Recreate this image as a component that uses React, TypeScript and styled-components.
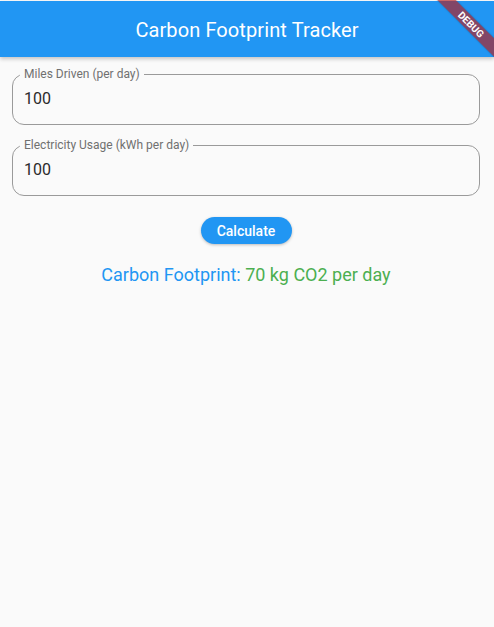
import React from "react";
import styled, { createGlobalStyle } from "styled-components";

const Global = createGlobalStyle`
  html, body { margin: 0; padding: 0; background: #fafafa; }
  body { font-family: Roboto, "Noto Sans", "Liberation Sans", sans-serif; }
  * { box-sizing: border-box; }
`;

const Page = styled.div`
  position: relative;
  width: 494px;
  height: 627px;
  background: #fafafa;
  padding-top: 1px;
  overflow: hidden;
`;

const AppBar = styled.header`
  height: 56px;
  background: #2196f3;
  display: flex;
  align-items: center;
  justify-content: center;
  box-shadow: 0 2px 4px rgba(0, 0, 0, 0.22);
  position: relative;
  z-index: 1;
`;

const Title = styled.h1`
  margin: 2px 0 0 0;
  color: #ffffff;
  font-size: 20px;
  font-weight: 400;
  letter-spacing: 0.1px;
`;

const Content = styled.main`
  display: flex;
  flex-direction: column;
  padding: 10px 14px 0 12px;
`;

const Field = styled.fieldset<{ $gap?: number }>`
  margin: ${(p) => p.$gap ?? 0}px 0 0 0;
  height: 58px;
  border: 1px solid #9a9a9a;
  border-radius: 12px;
  padding: 0 11px 0 7px;
`;

const Legend = styled.legend`
  font-size: 12px;
  line-height: 14px;
  color: #707070;
  padding: 0 4px;
`;

const InputBox = styled.div`
  height: 34px;
  display: flex;
  align-items: center;
`;

const Input = styled.input`
  border: none;
  background: transparent;
  outline: none;
  font-family: inherit;
  font-size: 16px;
  color: #2b2b2b;
  padding: 0 0 0 4px;
  margin: 0;
  width: 100%;
`;

const ButtonRow = styled.div`
  display: flex;
  justify-content: center;
  margin-top: 21px;
`;

const Button = styled.button`
  height: 27px;
  width: 91px;
  border: none;
  border-radius: 14px;
  background: #2196f3;
  color: #fff;
  font-family: inherit;
  font-size: 14px;
  font-weight: 500;
  box-shadow: 0 1px 3px rgba(0, 0, 0, 0.25);
  padding: 0;
`;

const Result = styled.p`
  margin: 20px 0 0 0;
  text-align: center;
  font-size: 18px;
  line-height: 22px;
`;

const Tone = styled.span<{ $color: string }>`
  color: ${(p) => p.$color};
`;

const BannerClip = styled.div`
  position: absolute;
  top: 0;
  right: 0;
  width: 64px;
  height: 64px;
  overflow: hidden;
  z-index: 2;
  pointer-events: none;
`;

const Band = styled.div`
  position: absolute;
  left: -14px;
  top: 18px;
  width: 110px;
  height: 13px;
  transform: rotate(45deg);
  background: rgba(183, 28, 28, 0.65);
  color: #fff;
  font-size: 10px;
  font-weight: 700;
  line-height: 13px;
  text-align: center;
  box-shadow: 0 0 2px rgba(0, 0, 0, 0.25);
`;

export default function App() {
  return (
    <Page>
      <Global />
      <AppBar>
        <Title>Carbon Footprint Tracker</Title>
      </AppBar>
      <Content>
        <Field>
          <Legend>Miles Driven (per day)</Legend>
          <InputBox>
            <Input defaultValue="100" />
          </InputBox>
        </Field>
        <Field $gap={13}>
          <Legend>Electricity Usage (kWh per day)</Legend>
          <InputBox>
            <Input defaultValue="100" />
          </InputBox>
        </Field>
        <ButtonRow>
          <Button>Calculate</Button>
        </ButtonRow>
        <Result>
          <Tone $color="#2196f3">Carbon Footprint: </Tone>
          <Tone $color="#4caf50">70 kg CO2 per day</Tone>
        </Result>
      </Content>
      <BannerClip>
        <Band>DEBUG</Band>
      </BannerClip>
    </Page>
  );
}
